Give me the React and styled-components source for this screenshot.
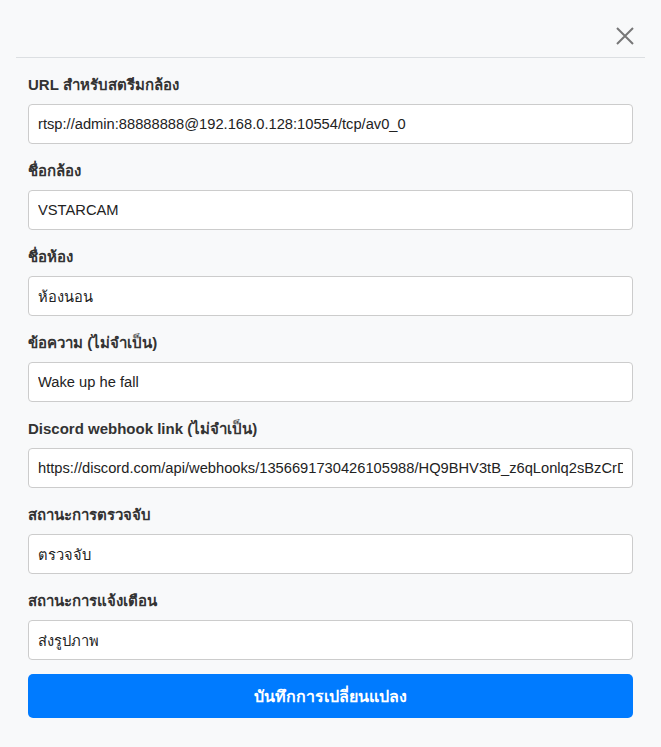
import React from "react";
import styled, { createGlobalStyle } from "styled-components";

const Global = createGlobalStyle`
  html, body { margin: 0; padding: 0; background: #f8f9fa; }
  body { font-family: "Liberation Sans", Arial, "Noto Sans", sans-serif; }
  * { box-sizing: border-box; }
`;

const Modal = styled.div`
  width: 661px;
  height: 747px;
  background: #f8f9fa;
  display: flex;
  flex-direction: column;
`;

const Header = styled.div`
  height: 58px;
  margin: 0 16px;
  border-bottom: 1px solid #dcdfe2;
  display: flex;
  align-items: center;
  justify-content: flex-end;
  padding-top: 14px;
`;

const CloseButton = styled.button`
  background: none;
  border: none;
  padding: 0;
  width: 20px;
  height: 20px;
  margin-right: 10px;
  cursor: pointer;
  display: flex;
  align-items: center;
  justify-content: center;
`;

const Body = styled.form`
  padding: 17px 28px 0;
  display: flex;
  flex-direction: column;
`;

const Field = styled.div`
  display: flex;
  flex-direction: column;
  margin-bottom: 17px;
  &:last-of-type { margin-bottom: 0; }
`;

const Label = styled.label`
  font-size: 15px;
  font-weight: bold;
  line-height: 20px;
  color: #333;
  margin-bottom: 9px;
`;

const Input = styled.input`
  height: 40px;
  width: 100%;
  border: 1px solid #ccc;
  border-radius: 4px;
  background: #fff;
  padding: 0 9px;
  font-family: inherit;
  font-size: 14.7px;
  color: #222;
  outline: none;
`;

const SaveButton = styled.button`
  margin-top: 14px;
  height: 44px;
  width: 100%;
  border: none;
  border-radius: 5px;
  background: #007bff;
  color: #fff;
  font-family: inherit;
  font-size: 16px;
  font-weight: bold;
  cursor: pointer;
`;

const fields = [
  ["URL สำหรับสตรีมกล้อง", "rtsp://admin:88888888@192.168.0.128:10554/tcp/av0_0"],
  ["ชื่อกล้อง", "VSTARCAM"],
  ["ชื่อห้อง", "ห้องนอน"],
  ["ข้อความ (ไม่จำเป็น)", "Wake up he fall"],
  ["Discord webhook link (ไม่จำเป็น)", "https://discord.com/api/webhooks/1356691730426105988/HQ9BHV3tB_z6qLonlq2sBzCrDxyz"],
  ["สถานะการตรวจจับ", "ตรวจจับ"],
  ["สถานะการแจ้งเตือน", "ส่งรูปภาพ"],
];

export default function App() {
  return (
    <>
      <Global />
      <Modal>
        <Header>
          <CloseButton type="button" aria-label="close">
            <svg width="18" height="18" viewBox="0 0 18 18">
              <path d="M1 1 L17 17 M17 1 L1 17" stroke="#777" strokeWidth="2" />
            </svg>
          </CloseButton>
        </Header>
        <Body onSubmit={(e) => e.preventDefault()}>
          {fields.map(([label, value]) => (
            <Field key={label}>
              <Label>{label}</Label>
              <Input defaultValue={value} />
            </Field>
          ))}
          <SaveButton type="submit">บันทึกการเปลี่ยนแปลง</SaveButton>
        </Body>
      </Modal>
    </>
  );
}
